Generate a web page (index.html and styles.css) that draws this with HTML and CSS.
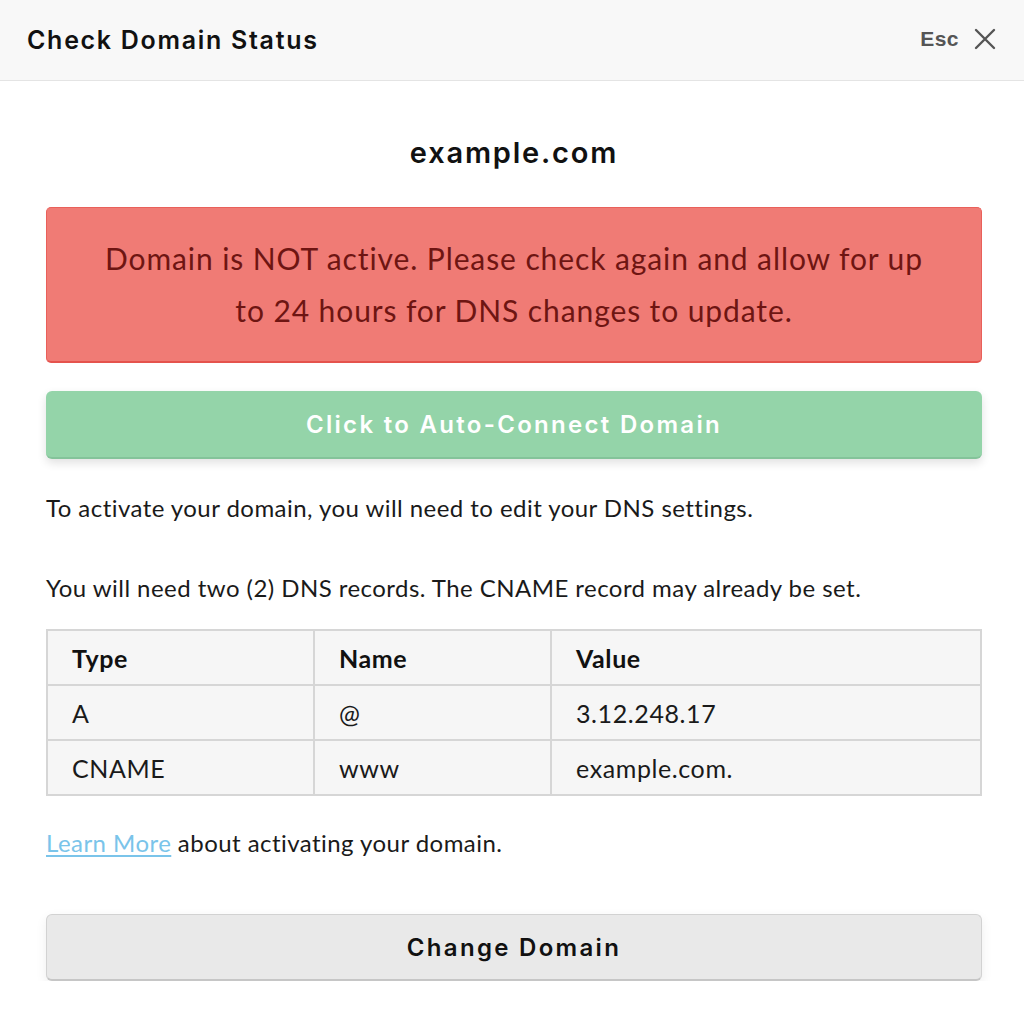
FILE: index.html
```html
<!DOCTYPE html>
<html lang="en">
<head>
<meta charset="utf-8">
<title>Check Domain Status</title>
<link rel="stylesheet" href="styles.css">
</head>
<body>
<div class="modal">
  <header class="modal-header">
    <h1 class="modal-title">Check Domain Status</h1>
    <div class="close">
      <span class="esc">Esc</span>
      <svg class="x-icon" width="22" height="22" viewBox="0 0 22 22" aria-hidden="true">
        <path d="M2 2 L20 20 M20 2 L2 20" stroke="#555" stroke-width="2.4" stroke-linecap="round" fill="none"/>
      </svg>
    </div>
  </header>
  <main class="modal-body">
    <h2 class="domain">example.com</h2>
    <div class="alert">Domain is NOT active. Please check again and allow for up to 24 hours for DNS changes to update.</div>
    <button class="btn btn-green">Click to Auto-Connect Domain</button>
    <p class="text p1">To activate your domain, you will need to edit your DNS settings.</p>
    <p class="text p2">You will need two (2) DNS records. The CNAME record may already be set.</p>
    <table class="dns">
      <thead>
        <tr><th class="c1">Type</th><th class="c2">Name</th><th>Value</th></tr>
      </thead>
      <tbody>
        <tr><td>A</td><td>@</td><td>3.12.248.17</td></tr>
        <tr><td>CNAME</td><td>www</td><td>example.com.</td></tr>
      </tbody>
    </table>
    <p class="text learn"><a href="#" class="link">Learn More</a> about activating your domain.</p>
    <button class="btn btn-gray">Change Domain</button>
  </main>
</div>
</body>
</html>
```

FILE: styles.css
```css
* { box-sizing: border-box; }
html, body { margin: 0; padding: 0; background: #fff; }
body { font-family: "Lato", "Noto Sans", sans-serif; color: #1a1a1a; }

.modal { width: 1024px; }

.modal-header {
  height: 81px;
  background: #f8f8f8;
  border-bottom: 1px solid #e4e4e4;
  display: flex;
  align-items: center;
  justify-content: space-between;
  padding: 0 28px 0 27px;
}
.modal-title {
  margin: 0;
  font-family: "Inter", sans-serif;
  font-weight: 600;
  font-size: 25px;
  letter-spacing: 1.7px;
  color: #111;
}
.close { display: flex; align-items: center; gap: 15px; padding-bottom: 2px; }
.esc {
  font-family: "Liberation Sans", Arial, sans-serif;
  font-weight: 700;
  font-size: 21px;
  letter-spacing: 0.5px;
  color: #555;
}
.x-icon { display: block; }

.modal-body { padding: 0 42px 0 46px; }

.domain {
  margin: 0;
  padding-top: 54px;
  height: 126px;
  text-align: center;
  font-family: "Inter", sans-serif;
  font-weight: 600;
  font-size: 29px;
  letter-spacing: 1.8px;
  color: #111;
  line-height: 36px;
}

.alert {
  background: #f07b75;
  border: 1px solid #e9605a;
  border-bottom: 2px solid #e5534d;
  border-radius: 5px;
  color: #6e1512;
  font-size: 30px;
  letter-spacing: 0.9px;
  line-height: 52px;
  text-align: center;
  padding: 24px 50px 26px;
  height: 156px;
}

.btn {
  display: block;
  width: 100%;
  border-radius: 6px;
  font-family: "Inter", sans-serif;
  font-weight: 600;
  font-size: 24px;
  letter-spacing: 2.3px;
  cursor: pointer;
}
.btn-green {
  margin-top: 28px;
  height: 68px;
  background: #94d4a9;
  border: none;
  border-bottom: 2px solid #84c39a;
  color: #fff;
  box-shadow: 0 4px 10px rgba(0,0,0,0.12);
}

.text { margin: 0; font-size: 24px; letter-spacing: 0.45px; line-height: 30px; color: #1a1a1a; }
.p1 { margin-top: 34px; }
.p2 { margin-top: 50px; }

.dns {
  margin-top: 26px;
  width: 100%;
  border-collapse: collapse;
  background: #f6f6f6;
  font-size: 25px;
  letter-spacing: 0.6px;
}
.dns th, .dns td {
  border: 2px solid #d6d6d6;
  height: 55px;
  padding: 0 24px;
  text-align: left;
  vertical-align: middle;
}
.dns th { font-weight: 700; color: #111; }
.dns td { font-weight: 400; color: #1a1a1a; }
.dns .c1 { width: 267px; }
.dns .c2 { width: 237px; }

.learn { margin-top: 32px; }
.link { color: #7ac4ea; text-decoration: underline; text-underline-offset: 3px; }

.btn-gray {
  margin-top: 56px;
  height: 67px;
  background: #e9e9e9;
  border: 1px solid #d2d2d2;
  border-bottom: 2px solid #c6c6c6;
  color: #111;
  box-shadow: 0 4px 12px rgba(0,0,0,0.07);
}
```
